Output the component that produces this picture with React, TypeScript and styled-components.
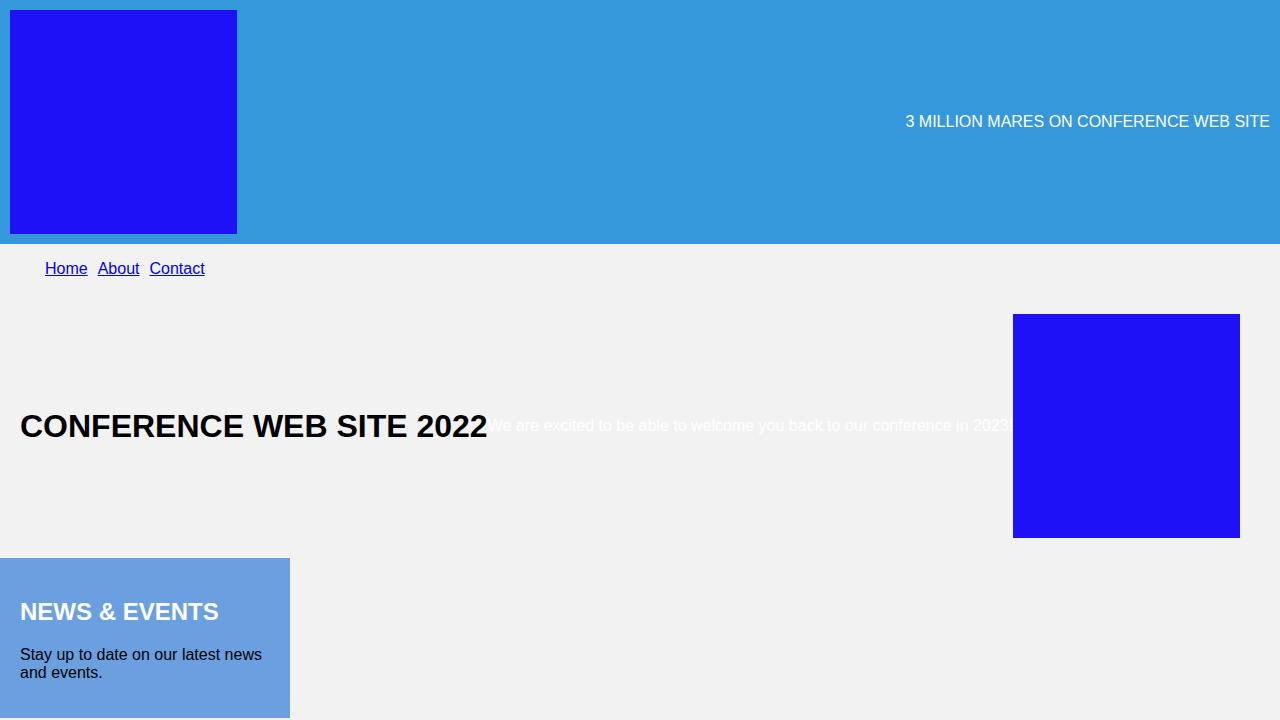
import React from "react";
import styled, { createGlobalStyle } from "styled-components";

const GlobalStyle = createGlobalStyle`
  html, body {
    margin: 0;
    padding: 0;
    background: #f2f2f2;
    font-family: "Liberation Sans", Arial, sans-serif;
  }
`;

const Header = styled.header`
  display: flex;
  justify-content: space-between;
  align-items: center;
  padding: 10px;
  background: #3598db;
`;

const Block = styled.div`
  width: 227px;
  height: 224px;
  flex: 0 0 auto;
  background: #1e10f7;
`;

const Tagline = styled.p`
  margin: 0;
  color: #ffffff;
  font-size: 16px;
`;

const NavList = styled.ul`
  margin: 16px 0;
  padding: 0 0 0 40px;
  list-style: none;
  display: flex;
`;

const NavItem = styled.li`
  margin: 0 5px;
  font-size: 16px;
`;

const NavLink = styled.a`
  color: #0000ee;
  text-decoration: underline;
`;

const Hero = styled.section`
  display: flex;
  align-items: center;
  padding: 20px;
`;

const Title = styled.h1`
  margin: 21px 0;
  font-size: 32px;
  font-weight: bold;
  color: #000;
  white-space: nowrap;
`;

const Intro = styled.p`
  margin: 16px 0;
  font-size: 16px;
  color: #ffffff;
  white-space: nowrap;
`;

const Aside = styled.aside`
  width: 250px;
  padding: 20px;
  background: #6a9fe0;
`;

const AsideTitle = styled.h2`
  margin: 0.83em 0;
  font-size: 24px;
  font-weight: bold;
  color: #ffffff;
`;

const AsideText = styled.p`
  margin: 16px 0;
  font-size: 16px;
  color: #000;
`;

export default function App() {
  return (
    <>
      <GlobalStyle />
      <Header>
        <Block />
        <Tagline>3 MILLION MARES ON CONFERENCE WEB SITE</Tagline>
      </Header>
      <nav>
        <NavList>
          <NavItem><NavLink href="#">Home</NavLink></NavItem>
          <NavItem><NavLink href="#">About</NavLink></NavItem>
          <NavItem><NavLink href="#">Contact</NavLink></NavItem>
        </NavList>
      </nav>
      <Hero>
        <Title>CONFERENCE WEB SITE 2022</Title>
        <Intro>We are excited to be able to welcome you back to our conference in 2023!</Intro>
        <Block />
      </Hero>
      <Aside>
        <AsideTitle>NEWS &amp; EVENTS</AsideTitle>
        <AsideText>Stay up to date on our latest news and events.</AsideText>
      </Aside>
    </>
  );
}
